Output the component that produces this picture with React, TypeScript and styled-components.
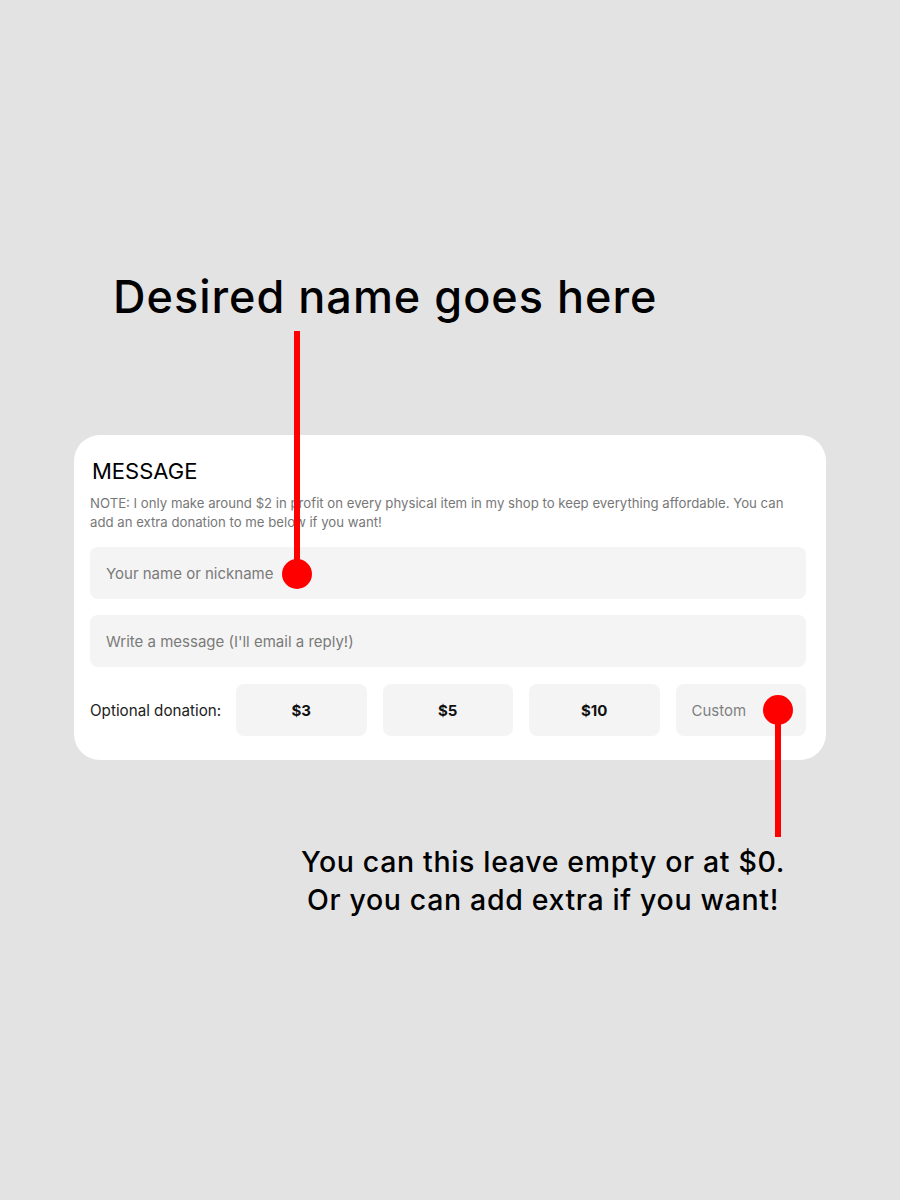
import React from "react";
import styled, { createGlobalStyle } from "styled-components";

const Global = createGlobalStyle`
  html, body { margin: 0; padding: 0; background: #e3e3e3; }
  * { box-sizing: border-box; }
`;

const Page = styled.div`
  position: relative;
  width: 900px;
  min-height: 1200px;
  background: #e3e3e3;
  display: flex;
  flex-direction: column;
  font-family: Inter, "Noto Sans", sans-serif;
`;

const Callout = styled.h1`
  margin: 268px 0 0 113px;
  font-family: Inter, "Noto Sans", sans-serif;
  font-weight: 500;
  font-size: 45px;
  line-height: 58px;
  letter-spacing: 1px;
  color: #000;
`;

const Card = styled.section`
  margin: 109px 0 0 74px;
  width: 752px;
  background: #fff;
  border-radius: 26px;
  padding: 22px 20px 24px 16px;
  display: flex;
  flex-direction: column;
`;

const Title = styled.h2`
  margin: 0 0 0 2px;
  font-weight: 400;
  font-size: 22px;
  line-height: 28px;
  color: #000;
`;

const Note = styled.p`
  margin: 9px 0 15px;
  max-width: 706px;
  font-size: 13.2px;
  line-height: 19px;
  color: #777;
`;

const Field = styled.div`
  height: 52px;
  border-radius: 8px;
  background: #f4f4f4;
  display: flex;
  align-items: center;
  padding: 0 16px;
  font-size: 15px;
  color: #7a7a7a;
  & + & {
    margin-top: 16px;
  }
`;

const DonationRow = styled.div`
  margin-top: 17px;
  display: grid;
  grid-template-columns: 130px repeat(4, 1fr);
  gap: 16px;
  align-items: center;
`;

const Label = styled.span`
  white-space: nowrap;
  font-size: 15.2px;
  color: #222;
`;

const Amount = styled.div<{ $custom?: boolean }>`
  height: 52px;
  border-radius: 8px;
  background: #f4f4f4;
  display: flex;
  align-items: center;
  justify-content: ${(p) => (p.$custom ? "flex-start" : "center")};
  padding: 0 16px;
  font-size: 15px;
  font-weight: ${(p) => (p.$custom ? 400 : 700)};
  color: ${(p) => (p.$custom ? "#808080" : "#111")};
`;

const Footnote = styled.p`
  margin: 83px 0 0 296px;
  width: 494px;
  text-align: center;
  font-family: Inter, "Noto Sans", sans-serif;
  font-weight: 500;
  font-size: 28.5px;
  line-height: 38px;
  letter-spacing: 0.65px;
  color: #000;
`;

const Stick = styled.div<{ $x: number; $top: number; $height: number }>`
  position: absolute;
  left: ${(p) => p.$x - 3}px;
  top: ${(p) => p.$top}px;
  width: 6px;
  height: ${(p) => p.$height}px;
  background: #ff0000;
`;

const Dot = styled.div<{ $x: number; $y: number }>`
  position: absolute;
  left: ${(p) => p.$x - 15}px;
  top: ${(p) => p.$y - 15}px;
  width: 30px;
  height: 30px;
  border-radius: 50%;
  background: #ff0000;
`;

export default function App() {
  return (
    <>
      <Global />
      <Page>
        <Callout>Desired name goes here</Callout>
        <Card>
          <Title>MESSAGE</Title>
          <Note>
            NOTE: I only make around $2 in profit on every physical item in my shop to keep everything
            affordable. You can add an extra donation to me below if you want!
          </Note>
          <Field>Your name or nickname</Field>
          <Field>Write a message (I'll email a reply!)</Field>
          <DonationRow>
            <Label>Optional donation:</Label>
            <Amount>$3</Amount>
            <Amount>$5</Amount>
            <Amount>$10</Amount>
            <Amount $custom>Custom</Amount>
          </DonationRow>
        </Card>
        <Footnote>
          You can this leave empty or at $0.
          <br />
          Or you can add extra if you want!
        </Footnote>
        <Stick $x={297} $top={331} $height={244} />
        <Dot $x={297} $y={574} />
        <Stick $x={778} $top={710} $height={127} />
        <Dot $x={778} $y={710} />
      </Page>
    </>
  );
}
